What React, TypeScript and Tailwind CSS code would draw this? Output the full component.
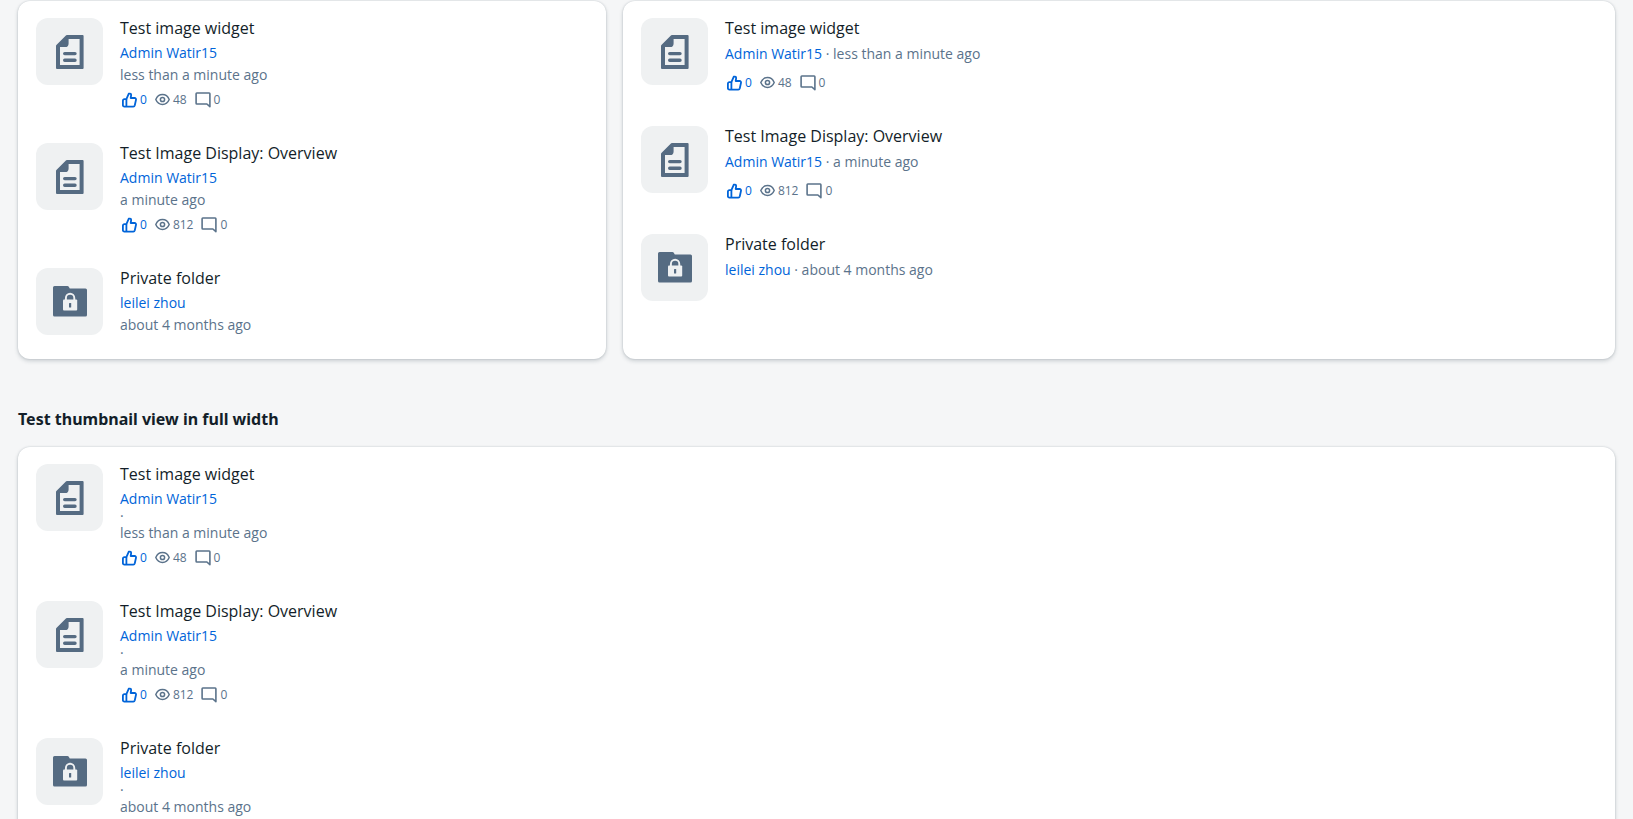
type Layout = "stacked" | "inline" | "dotted";

interface Item {
  title: string;
  author: string;
  time: string;
  kind: "document" | "folder";
  stats?: { likes: number; views: number; comments: number };
}

const items: Item[] = [
  {
    title: "Test image widget",
    author: "Admin Watir15",
    time: "less than a minute ago",
    kind: "document",
    stats: { likes: 0, views: 48, comments: 0 },
  },
  {
    title: "Test Image Display: Overview",
    author: "Admin Watir15",
    time: "a minute ago",
    kind: "document",
    stats: { likes: 0, views: 812, comments: 0 },
  },
  {
    title: "Private folder",
    author: "leilei zhou",
    time: "about 4 months ago",
    kind: "folder",
  },
];

function DocumentIcon() {
  return (
    <svg width="28" height="34" viewBox="0 0 28 34" fill="none" aria-hidden="true">
      <path
        fillRule="evenodd"
        d="M10.800 0H26.600a1 1 0 0 1 1 1v32a1 1 0 0 1-1 1H1a1 1 0 0 1-1-1V10.800q0-.5.4-.9L9.900.4q.4-.4.900-.4zM12.600 4V8.400a3.600 3.600 0 0 1-3.600 3.600H4V30H23.600V4z"
        fill="#556b82"
      />
      <path d="M8.700 18.600h10.300M8.700 25.300h10.300" stroke="#556b82" strokeWidth="3.400" strokeLinecap="round" />
    </svg>
  );
}

function FolderIcon() {
  return (
    <svg width="34" height="31" viewBox="0 0 34 31" fill="none" aria-hidden="true">
      <path
        d="M1.500 0h13q.7 0 1.100.6l1.200 1.900h15.700A1.500 1.500 0 0 1 34 4v25a1.500 1.500 0 0 1-1.500 1.500h-31A1.500 1.500 0 0 1 0 29V1.500A1.500 1.500 0 0 1 1.500 0z"
        fill="#556b82"
      />
      <path d="M12.900 14v-2a4.200 4.200 0 0 1 8.400 0v2" stroke="#eff1f2" strokeWidth="1.900" />
      <rect x="10" y="13.400" width="14.200" height="11" rx="1" fill="#eff1f2" />
      <rect x="16" y="17" width="2.200" height="4.400" rx=".5" fill="#556b82" />
    </svg>
  );
}

function LikeIcon() {
  return (
    <svg width="15" height="16" viewBox="0 0 15 16" fill="none" stroke="currentColor" strokeWidth="1.800" strokeLinejoin="round" aria-hidden="true">
      <path d="M4.400 7.200 6.800 1.700C8.300 1.200 9.300 2 9.100 3.400L8.700 6h3.900c1 0 1.600.8 1.400 1.700l-1.200 5.600c-.2.800-.7 1.300-1.500 1.300H2.400c-.9 0-1.500-.6-1.500-1.400V8.700c0-.9.6-1.500 1.500-1.500z" />
      <path d="M4.400 7.200v7.400" />
    </svg>
  );
}

function ViewIcon() {
  return (
    <svg width="15" height="16" viewBox="0 0 15 16" fill="none" stroke="currentColor" strokeWidth="1.500" aria-hidden="true">
      <path d="M.8 7.500C2.200 4.200 4.600 2.600 7.500 2.600s5.300 1.600 6.700 4.900c-1.400 3.300-3.800 4.900-6.700 4.900S2.200 10.800.8 7.500z" strokeLinejoin="round" />
      <circle cx="7.500" cy="7.500" r="2.100" />
    </svg>
  );
}

function CommentIcon() {
  return (
    <svg width="16" height="16" viewBox="0 0 16 16" fill="none" stroke="currentColor" strokeWidth="1.600" strokeLinejoin="round" aria-hidden="true">
      <path d="M1.800 1h12.400q.7 0 .7.700v13l-3-2.700H1.800q-.7 0-.7-.7V1.700q0-.7.7-.7z" />
    </svg>
  );
}

function Stats({ likes, views, comments }: { likes: number; views: number; comments: number }) {
  return (
    <div className="flex items-center gap-2 pl-0.5 text-xs leading-5 text-[#5b738b]">
      <button type="button" aria-label={`Like, ${likes}`} className="flex items-center gap-[3px] text-[#0064d9]">
        <LikeIcon />
        {likes}
      </button>
      <span className="flex items-center gap-[3px]">
        <ViewIcon />
        {views}
      </span>
      <span className="flex items-center gap-[3px]">
        <CommentIcon />
        {comments}
      </span>
    </div>
  );
}

const rowHeight: Record<Layout, string> = {
  stacked: "not-last:min-h-[125px]",
  inline: "not-last:min-h-[108px]",
  dotted: "not-last:min-h-[137px]",
};

function ItemRow({ item, layout }: { item: Item; layout: Layout }) {
  return (
    <li className={`flex items-start gap-[17px] ${rowHeight[layout]}`}>
      <div className="flex size-[67px] shrink-0 items-center justify-center rounded-xl bg-[#eff1f2]">
        {item.kind === "document" ? <DocumentIcon /> : <FolderIcon />}
      </div>
      <div className="min-w-0 text-sm leading-[22px] text-[#5b738b]">
        <h3 className="text-base leading-5 text-[#131e29]">{item.title}</h3>
        {layout === "inline" ? (
          <p className="mt-[5px] mb-2">
            <a href="#" className="text-[#0064d9]">{item.author}</a> · {item.time}
          </p>
        ) : (
          <div className="my-1">
            <a href="#" className="block text-[#0064d9]">{item.author}</a>
            {layout === "dotted" && <span className="block leading-3">·</span>}
            <p>{item.time}</p>
          </div>
        )}
        {item.stats && <Stats {...item.stats} />}
      </div>
    </li>
  );
}

function Card({ layout }: { layout: Layout }) {
  return (
    <section className="rounded-xl bg-white px-[18px] pt-[17px] pb-[19px] shadow-[0_0_2px_rgba(34,53,72,0.2),0_2px_4px_rgba(34,53,72,0.2)]">
      <ul>
        {items.map((item) => (
          <ItemRow key={item.title} item={item} layout={layout} />
        ))}
      </ul>
    </section>
  );
}

export default function App() {
  return (
    <main className="min-h-screen bg-[#f5f6f7] px-[18px] pt-px font-['Open_Sans',sans-serif]">
      <div className="grid grid-cols-[147fr_248fr] gap-[17px]">
        <Card layout="stacked" />
        <Card layout="inline" />
      </div>
      <h2 className="mt-12 mb-4 font-['Noto_Sans',sans-serif] text-base leading-6 font-bold text-[#131e29]">
        Test thumbnail view in full width
      </h2>
      <Card layout="dotted" />
    </main>
  );
}
